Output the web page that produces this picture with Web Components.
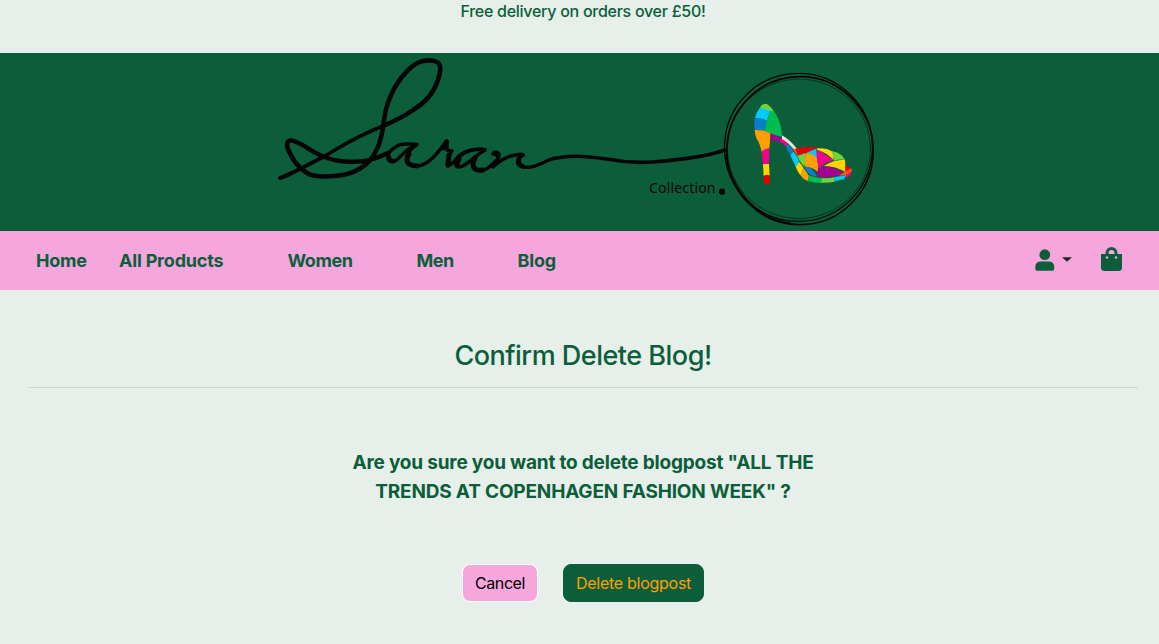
<!DOCTYPE html>
<html lang="en">
<head>
<meta charset="utf-8">
<title>Saran Collection</title>
<style>
html{--green:#0c5e3a;--pink:#f4a6dd;--mist:#e6efea}
body{margin:0;background:#e6efea;color:var(--green);font-family:Inter,"Liberation Sans",sans-serif;font-size:16px;overflow:hidden}
</style>
</head>
<body>
<shop-page>
  <promo-bar>Free delivery on orders over £50!</promo-bar>
  <brand-logo></brand-logo>
  <main-nav></main-nav>
  <confirm-panel>
    <span slot="title">Confirm Delete Blog!</span>
    <span slot="line1">Are you sure you want to delete blogpost "ALL THE</span>
    <span slot="line2">TRENDS AT COPENHAGEN FASHION WEEK" ?</span>
    <action-button class="cancel">Cancel</action-button>
    <action-button class="danger">Delete blogpost</action-button>
  </confirm-panel>
</shop-page>
<script>
const define=(name,html)=>customElements.define(name,class extends HTMLElement{
  constructor(){super();this.attachShadow({mode:"open"}).innerHTML=html}
});
define("shop-page",`<style>:host{display:flex;flex-direction:column;height:644px}</style><slot></slot>`);
define("promo-bar",`<style>:host{display:block;box-sizing:border-box;height:53px;padding-left:7px;text-align:center;line-height:23px;font-size:16px;font-weight:500;letter-spacing:-.27px}</style><slot></slot>`);
define("brand-logo",`<style>:host{display:block;height:178px;background:var(--green)}svg{display:block}text{font-family:"Noto Sans","Open Sans",sans-serif;font-size:14px;font-weight:400}</style>
<svg width="1159" height="178" viewBox="0 53 1159 178" fill="none" stroke="#050505" stroke-linecap="round" stroke-linejoin="round">
<path stroke-width="4" d="M280 178C287 176 293 172 300 169L323 157"/>
<path stroke-width="3.500" d="M323 157C338 149 352 138 383 126"/>
<path stroke-width="4.600" d="M383 126C397 120 406 115 413 110C425 103 434 92 438 80C441 71 441 64 437 62C433 60 428 60 423 61C413 63 402 75 395 87C389 98 386 107 384.500 117C383 131 381 142 376 151C367 169 350 175 334 176C323 177 312 176 307 173C299 168 293 160 290 153C286 147 286 140 291 140.500C300 141 309 151 323 156.500C336 162 354 163 368 160.500C377 158 384 155 388 153"/>
<path stroke-width="3.500" d="M417 144.500C408 143.500 401 143.500 397 146C389 151 386 155 389 160C393 164 397 160 402 155C406 150 411 147 417 144.500C410 149 406 155 407 160C409 167 417 167 422 165C433 161 439 150 447 141L447 150L452 151C449 155 447 160 447.500 166C453 166 456 156 463 153C470 149 478 149 485 149.500C474 148 465 152 460 156C454 161 455 167 459 167C466 167 475 155 485 150C476 155 471 161 473 167C476 172 485 171 490 166.500C496 161 500 157 499 154C497 151 494 152 493 154M493 167C499 162 506 156 516 155C520 154 523 154 523.500 155C519 157 516 162 520 165.500C525 169 534 167 540 164C547 161 551 158 560 157.500C577 155 591 157 607 159C622 162 637 163 652 162C680 160 705 157 725 150"/>
<path stroke-width="5" d="M388.500 157Q389 161 392 161M409 154Q405 161 409 164Q412 166 417 166M446.500 142L443 148M448 165L449 155M457 164L459 159M475 158Q471 165 475 169Q478 171 483 170M494.500 153L498 155M519 159Q517 164 522 166"/>
<ellipse cx="800" cy="150.700" rx="73.200" ry="74" stroke-width="1.700"/>
<ellipse cx="798.500" cy="147.300" rx="74" ry="74" stroke-width="1.300"/>
<ellipse cx="799" cy="148.800" rx="71.500" ry="69.700" stroke-width=".5"/>
<path d="M726 155C729 175 738 192 753 206C765 217 779 222 790 223" stroke-width="1.600"/>
<circle cx="722" cy="191.700" r="3.100" fill="#050505" stroke="none"/>
<text x="649" y="193" fill="#050505" stroke="none" textLength="66.500">Collection</text>
<g transform="translate(715 60) scale(.33333)" stroke="none">
<path fill="#72d13e" d="M134 144Q141 131 151 131Q163 132 178 155L164 154Z"/>
<path fill="#00cbff" d="M134 144Q149 147 166 153L155 182Q137 173 120 174Q124 157 134 144Z"/>
<path fill="#087fc9" d="M120 174Q139 173 155 182L149 212L119 210Q116 190 120 174Z"/>
<path fill="#00bd50" d="M166 152L178 155Q200 186 201 230L180 226L149 212L155 182Z"/>
<path fill="#ff9f00" d="M119 210L149 212L167 220L163 265L140 276Q134 248 125 236Q120 226 119 210Z"/>
<path fill="#f0008c" d="M140 275Q149 266 163 264L162 313L144 312Z"/>
<path fill="#ffd500" d="M144 312H162L164 347Q154 341 146 349Z"/>
<path fill="#e60000" d="M146 349Q153 342 164 347V372H148Z"/>
<path fill="#a10090" d="M166 220L201 234L194 245Q183 240 167 243Z"/>
<path fill="#f0008c" d="M201 234L220 253L212 259Q202 247 192 244Z"/>
<path fill="#e9e5ce" d="M201 226Q224 239 246 266L238 271Q221 248 201 237Z"/>
<path fill="#087fc9" d="M212 258L220 253Q230 262 236 277L226 286Z"/>
<path fill="#00cbff" d="M226 286L236 275Q249 290 253 306L242 320Q234 302 226 286Z"/>
<path fill="#ffd500" d="M242 320L253 306L265 323L258 347Q250 340 242 320Z"/>
<path fill="#ff9f00" d="M265 323Q277 339 282 348L278 363Q264 358 258 347Z"/>
<path fill="#ff5800" d="M232 265L244 268L259 279L247 288Z"/>
<path fill="#e60000" d="M241 266Q275 258 309 263L270 281L248 285Z"/>
<path fill="#00cbff" d="M271 280L304 266L307 300Q291 281 271 280Z"/>
<path fill="#72d13e" d="M247 288L271 279L273 300L267 320Q252 303 247 288Z"/>
<path fill="#ff9f00" d="M272 280Q300 280 312 304L309 336Q292 320 269 320Z"/>
<path fill="#087fc9" d="M267 319Q294 320 306 350Q279 349 267 319Z"/>
<path fill="#f0008c" d="M304 266L357 301Q326 307 312 329L306 300Z"/>
<path fill="#ffd500" d="M306 265Q335 263 353 275L356 300Q334 277 306 269Z"/>
<path fill="#72d13e" d="M351 274Q379 278 390 299Q371 298 357 302Z"/>
<path fill="#ffd500" d="M327 318Q356 298 390 299L392 336Q362 318 327 318Z"/>
<path fill="#a10090" d="M309 326Q345 308 384 338Q356 356 306 350Z"/>
<path fill="#e60000" d="M391 317Q402 317 410 329L391 337Z"/>
<path fill="#ff5800" d="M384 338L410 325V335L397 344L371 347Z"/>
<path fill="#00bd50" d="M282 345Q295 353 320 354L318 369Q298 369 279 363Z"/>
<path fill="#72d13e" d="M320 354Q337 356 359 352V365Q339 369 318 368Z"/>
<path fill="#00cbff" d="M359 352L394 345L387 358L359 363Z"/>
<path fill="#f0008c" d="M394 345L410 333Q408 350 391 354Z"/>
</g></svg>`);
define("nav-link",`<style>:host{display:block;font-size:18px;font-weight:700;letter-spacing:-.2px;white-space:nowrap}:host(.snug){letter-spacing:-.45px}</style><slot></slot>`);
define("main-nav",`<style>:host{display:flex;height:59px;background:var(--pink);align-items:center;box-sizing:border-box;padding:0 37px 0 36px}
nav{display:grid;grid-template-columns:83px 168.500px 129px 101px auto;flex:1}
.user{width:20px;height:22px;margin-bottom:2px}.caret{width:10px;height:5px;margin:0 29px 2px 7px}.bag{width:21px;height:24px;margin-bottom:3px}svg{display:block}</style>
<nav><nav-link>Home</nav-link><nav-link>All Products</nav-link><nav-link class="snug">Women</nav-link><nav-link class="snug">Men</nav-link><nav-link>Blog</nav-link></nav>
<svg class="user" viewBox="0 0 20 22" fill="#0c5e3a"><circle cx="9.800" cy="5.700" r="5.400"/><path d="M6 12.500H13.500Q19.200 12.500 19.200 18V20Q19.200 21.700 17.300 21.700H2.200Q.3 21.700 .3 20V18Q.3 12.500 6 12.500Z"/></svg>
<svg class="caret" viewBox="0 0 10 5"><path fill="#212529" d="M0 .3H10L5 4.800Z"/></svg>
<svg class="bag" viewBox="0 0 21 24"><path fill="#0c5e3a" fill-rule="evenodd" d="M0 7H4.500V6a6 6 0 0 1 12 0V7H21V20.500Q21 24 17.500 24H3.500Q0 24 0 20.500ZM7.500 7H13.500V6a3 3 0 0 0-6 0Z"/><circle cx="6" cy="10.500" r="1.200" fill="#f4a6dd"/><circle cx="15" cy="10.500" r="1.200" fill="#f4a6dd"/></svg>`);
define("confirm-panel",`<style>:host{display:flex;flex-direction:column;align-items:center;padding:47px 21px 0 28px}
h2{margin:0;font-size:27px;font-weight:500;line-height:37px;letter-spacing:-.5px}
hr{width:100%;height:1px;margin:13px 0 60px;border:0;background:#cbd7d1}
p{margin:0;text-align:center;font-size:19px;line-height:29px;font-weight:700}
.l1{letter-spacing:-.2px}.l2{letter-spacing:-.18px}
.actions{display:flex;gap:25px;margin-top:58px}</style>
<h2><slot name="title"></slot></h2><hr><p class="l1"><slot name="line1"></slot></p><p class="l2"><slot name="line2"></slot></p><div class="actions"><slot></slot></div>`);
define("action-button",`<style>:host{display:block;box-sizing:border-box;height:38px;border-radius:8px;text-align:center;font-size:16px;line-height:36px;border:1px solid var(--green);white-space:nowrap}
:host(.cancel){width:76px;background:var(--pink);border-color:#fff;color:#000;letter-spacing:-.4px}
:host(.danger){width:141px;background:var(--green);color:#ff9f00;letter-spacing:-.27px}</style><slot></slot>`);
</script>
</body>
</html>
